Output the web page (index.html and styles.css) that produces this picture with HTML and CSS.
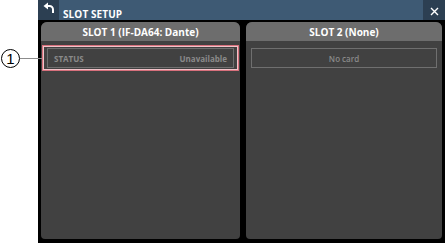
FILE: index.html
```html
<!DOCTYPE html>
<html>
<head>
<meta charset="utf-8">
<link rel="stylesheet" href="styles.css">
</head>
<body>
<div class="page">
  <div class="callout">
    <div class="callout-num">1</div>
    <div class="callout-line"></div>
  </div>
  <div class="window">
    <div class="titlebar">
      <div class="back">
        <svg width="12" height="12" viewBox="0 0 12 12">
          <path d="M0.5 4 L5 0.5 L5 7.5 Z" fill="#ffffff"/>
          <path d="M4 4 H6.5 A3.5 3.5 0 0 1 10 7.5 V11" fill="none" stroke="#ffffff" stroke-width="2"/>
        </svg>
      </div>
      <div class="title">SLOT SETUP</div>
      <div class="close">
        <svg width="9" height="9" viewBox="0 0 9 9">
          <path d="M1 1 L8 8 M8 1 L1 8" stroke="#ffffff" stroke-width="1.4"/>
        </svg>
      </div>
    </div>
    <div class="panels">
      <div class="panel">
        <div class="panel-head">SLOT 1 (IF-DA64: Dante)</div>
        <div class="panel-body marked">
          <div class="highlight">
            <div class="row">
              <span>STATUS</span>
              <span>Unavailable</span>
            </div>
          </div>
        </div>
      </div>
      <div class="panel">
        <div class="panel-head">SLOT 2 (None)</div>
        <div class="panel-body">
          <div class="row center">No card</div>
        </div>
      </div>
    </div>
  </div>
</div>
</body>
</html>
```

FILE: styles.css
```css
* { box-sizing: border-box; }
html, body { margin: 0; padding: 0; background: #ffffff; }
body { font-family: "Open Sans", "Noto Sans", sans-serif; }

.page {
  display: flex;
  width: 445px;
  height: 244px;
}

.callout {
  width: 38px;
  flex: none;
  display: flex;
  align-items: center;
  align-self: flex-start;
  margin-top: 48px;
  height: 20px;
  position: relative;
  z-index: 2;
  margin-right: -4px;
  width: 42px;
}
.callout-num {
  width: 19px;
  height: 19px;
  margin-left: 1px;
  border: 1px solid #000;
  border-radius: 50%;
  display: flex;
  align-items: center;
  justify-content: center;
  font-family: "Liberation Sans", sans-serif;
  font-size: 15px;
  line-height: 1;
  color: #000;
  background: #fff;
  flex: none;
}
.callout-line {
  flex: 1;
  height: 1px;
  background: #8c8c8c;
}

.window {
  width: 407px;
  height: 243px;
  background: #000;
  display: flex;
  flex-direction: column;
  flex: none;
}

.titlebar {
  height: 20px;
  background: #3e5a74;
  display: flex;
  align-items: center;
  flex: none;
}
.back {
  width: 21px;
  height: 20px;
  background: #2c3f52;
  display: flex;
  align-items: center;
  justify-content: center;
  padding-bottom: 4px;
}
.title {
  margin-left: 4px;
  margin-top: 7px;
  color: #ffffff;
  font-weight: 700;
  font-size: 10px;
  letter-spacing: 0.1px;
}
.close {
  margin-left: auto;
  width: 22px;
  height: 20px;
  background: #2c3f52;
  display: flex;
  align-items: center;
  justify-content: center;
  padding-top: 2px;
}

.panels {
  flex: 1;
  display: grid;
  grid-template-columns: 199fr 196fr;
  gap: 6px;
  padding: 2px 3px 4px 3px;
}
.panel {
  background: #414141;
  border-radius: 6px 6px 4px 4px;
  overflow: hidden;
}
.panel-head {
  height: 19px;
  background: #6d6d6d;
  color: #ffffff;
  font-weight: 700;
  font-size: 10px;
  display: flex;
  align-items: center;
  justify-content: center;
}
.panel-body {
  padding: 7px 5px;
}
.panel-body.marked {
  padding: 4px 1px 0 1px;
}
.highlight {
  border: 1px solid #d7707c;
  box-shadow: inset 0 0 0 1px #f2c3c9;
  padding: 2px 4px 2px 4px;
}
.row {
  height: 20px;
  border: 1px solid #6f6f6f;
  display: flex;
  align-items: center;
  justify-content: space-between;
  padding: 0 6px;
  color: #8a8a8a;
  font-weight: 700;
  font-size: 8px;
}
.row.center {
  justify-content: center;
  font-weight: 600;
}
```
